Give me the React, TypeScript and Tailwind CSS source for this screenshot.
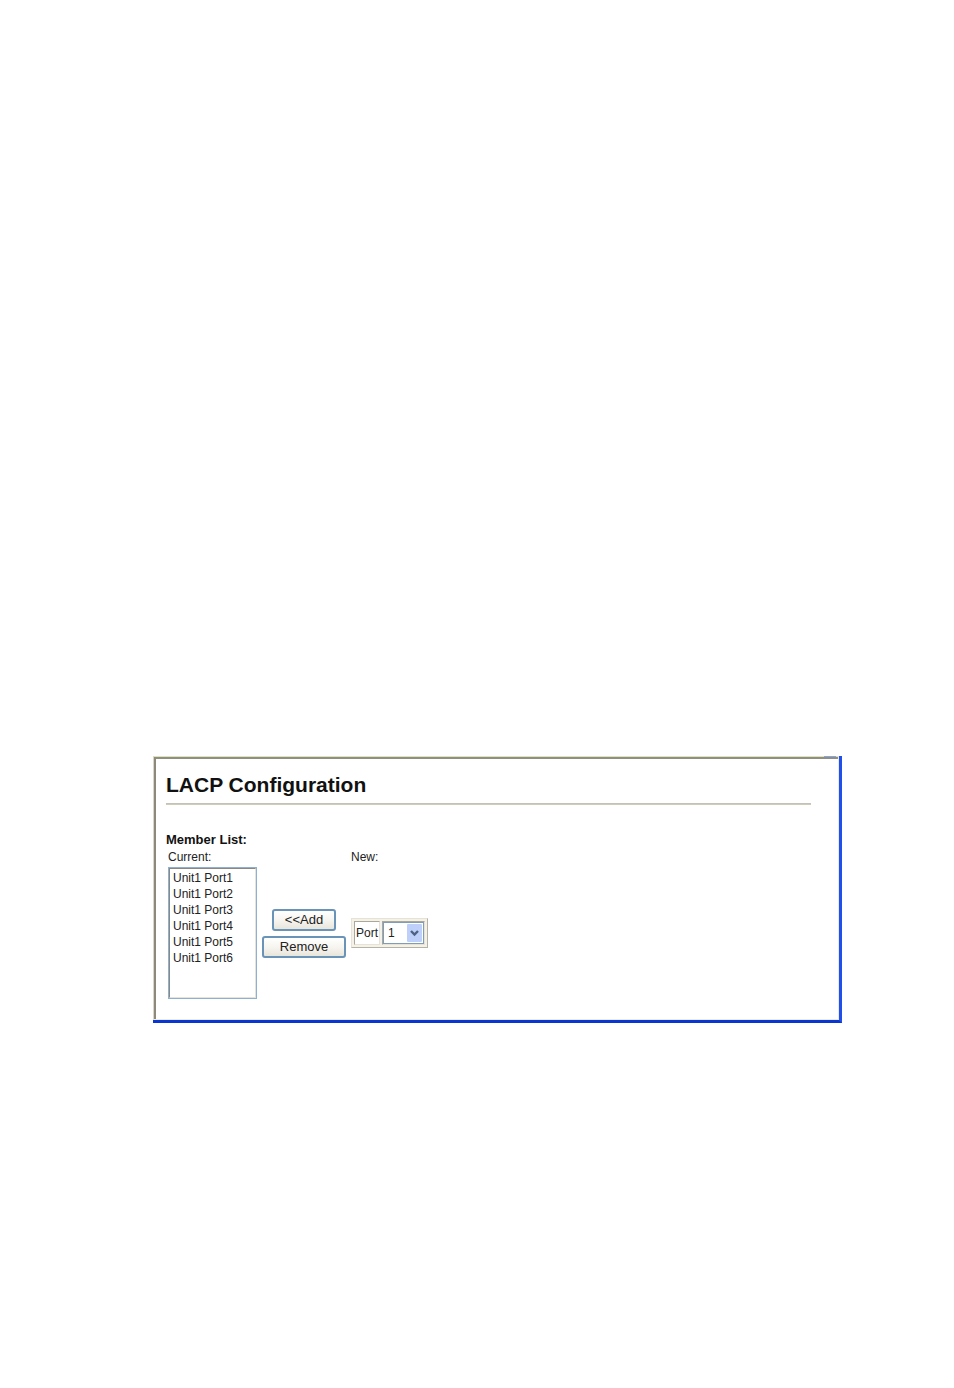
import React, { useState } from "react";

const initialMembers = [
  "Unit1 Port1",
  "Unit1 Port2",
  "Unit1 Port3",
  "Unit1 Port4",
  "Unit1 Port5",
  "Unit1 Port6",
];

const ports = Array.from({ length: 24 }, (_, i) => String(i + 1));

interface XpButtonProps {
  className: string;
  onClick: () => void;
  children: React.ReactNode;
}

const XpButton: React.FC<XpButtonProps> = ({ className, onClick, children }) => (
  <button
    type="button"
    onClick={onClick}
    className={`flex h-[22px] items-center justify-center rounded-[3px] border-2 border-[#6a93b8] bg-linear-to-b from-white via-[#f6f5f0] to-[#e8e5da] text-[13px] leading-4 text-[#222] ${className}`}
  >
    {children}
  </button>
);

const App: React.FC = () => {
  const [members, setMembers] = useState<string[]>(initialMembers);
  const [selected, setSelected] = useState<string[]>([]);
  const [port, setPort] = useState("1");

  const handleAdd = () => {
    const member = `Unit1 Port${port}`;
    if (!members.includes(member)) {
      setMembers([...members, member]);
    }
  };

  const handleRemove = () => {
    setMembers(members.filter((member) => !selected.includes(member)));
    setSelected([]);
  };

  return (
    <div className="min-h-screen bg-white pt-[756px] pr-28 pl-[153px] font-['Liberation_Sans',Arial,sans-serif] text-xs text-[#222]">
      <main className="relative border-r-3 border-b-3 border-r-[#1f50ee] border-b-[#0a35d0]">
        <div className="border border-t-[#dfe3b8] border-r-[#ece9d8] border-b-[#ece9d8] border-l-[#d8d6cc]">
          <div className="border-t-2 border-l-2 border-t-[#918f83] border-l-[#8d8a7c] pt-[14px] pr-[27px] pb-5 pl-[10px]">
            <h1 className="text-[21px] leading-6 font-bold text-[#111]">
              LACP Configuration
            </h1>
            <hr className="mt-[6px] h-[2px] border-t border-b border-t-[#c4c2b6] border-b-[#cfccb8]" />

            <h2 className="mt-[27px] text-[13px] leading-[15px] font-bold text-[#111]">
              Member List:
            </h2>
            <div className="ml-[2px] grid grid-cols-[89px_84px_auto] items-center justify-start gap-x-[5px]">
              <label htmlFor="current" className="col-span-2 leading-5">
                Current:
              </label>
              <span className="leading-5">New:</span>

              <div className="border border-[#8fb0d3]">
                <select
                  id="current"
                  multiple
                  size={8}
                  value={selected}
                  onChange={(e) =>
                    setSelected(
                      Array.from(e.target.selectedOptions, (o) => o.value)
                    )
                  }
                  className="block h-[130px] w-full overflow-hidden border border-t-[#8b8880] border-r-[#e6e3d8] border-b-[#e6e3d8] border-l-[#8b8880] bg-white py-[2px] pl-[3px] outline-none"
                >
                  {members.map((member) => (
                    <option
                      key={member}
                      value={member}
                      className="h-4 min-h-0 p-0 text-[12px] leading-4"
                    >
                      {member}
                    </option>
                  ))}
                </select>
              </div>

              <div className="flex flex-col items-center gap-[5px]">
                <XpButton className="w-16" onClick={handleAdd}>
                  &lt;&lt;Add
                </XpButton>
                <XpButton className="w-full" onClick={handleRemove}>
                  Remove
                </XpButton>
              </div>

              <div className="flex h-[30px] items-stretch gap-[2px] border border-t-[#e6e3d6] border-r-[#b5b2a4] border-b-[#b5b2a4] border-l-[#e6e3d6] bg-[#f3f1e8] p-[2px]">
                <label
                  htmlFor="port"
                  className="flex items-center border border-t-[#aca899] border-r-[#e6e3d6] border-b-[#e6e3d6] border-l-[#aca899] bg-white px-px"
                >
                  Port
                </label>
                <div className="relative border border-t-[#aca899] border-r-[#e6e3d6] border-b-[#e6e3d6] border-l-[#aca899] bg-white">
                  <select
                    id="port"
                    value={port}
                    onChange={(e) => setPort(e.target.value)}
                    className="block h-full w-[41px] appearance-none border border-[#7f9db9] bg-white pl-1 outline-none"
                  >
                    {ports.map((p) => (
                      <option key={p} value={p}>
                        {p}
                      </option>
                    ))}
                  </select>
                  <svg
                    viewBox="0 0 15 18"
                    className="pointer-events-none absolute top-[2px] right-[2px] h-[18px] w-[15px]"
                    aria-hidden="true"
                  >
                    <rect width="15" height="18" rx="1" fill="#bed0fa" />
                    <path
                      d="M4 7l3.5 3.5L11 7"
                      fill="none"
                      stroke="#4d6185"
                      strokeWidth="2.4"
                    />
                  </svg>
                </div>
              </div>
            </div>
          </div>
        </div>
        <div className="absolute top-0 right-[3px] h-px w-3 bg-[#86a5dc]" />
      </main>
    </div>
  );
};

export default App;
